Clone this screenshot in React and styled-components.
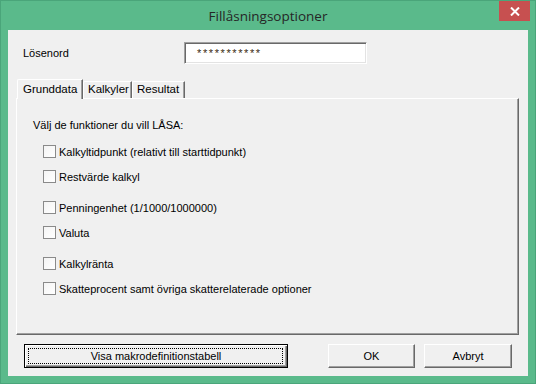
import styled, { createGlobalStyle } from 'styled-components';

const GlobalStyle = createGlobalStyle`
    body {
        margin: 0;
        background: #ffffff;
        font-family: "Liberation Sans", Arial, sans-serif;
    }
`;

const grupper = [
    ['Kalkyltidpunkt (relativt till starttidpunkt)', 'Restvärde kalkyl'],
    ['Penningenhet (1/1000/1000000)', 'Valuta'],
    ['Kalkylränta', 'Skatteprocent samt övriga skatterelaterade optioner'],
];

const flikar = [
    { namn: 'Grunddata', bredd: 66, aktiv: true },
    { namn: 'Kalkyler', bredd: 49 },
    { namn: 'Resultat', bredd: 53 },
];

export default function App() {
    return (
        <>
            <GlobalStyle />
            <Fonster>
                <TitelRad>
                    <Titel>Fillåsningsoptioner</Titel>
                    <Stang>
                        <svg width="10" height="9" viewBox="0 0 10 9">
                            <path d="M1 0.5 L9 8.5 M9 0.5 L1 8.5" stroke="#ffffff" strokeWidth="2" />
                        </svg>
                    </Stang>
                </TitelRad>
                <Klient>
                    <LosenRad>
                        <Etikett>Lösenord</Etikett>
                        <LosenFalt>***********</LosenFalt>
                    </LosenRad>

                    <FlikRad>
                        {flikar.map((f) => (
                            <Flik key={f.namn} aktiv={f.aktiv} bredd={f.bredd}>{f.namn}</Flik>
                        ))}
                    </FlikRad>

                    <Panel>
                        <Intro>Välj de funktioner du vill LÅSA:</Intro>
                        <Alternativ>
                            {grupper.map((grupp, i) => (
                                <Grupp key={i}>
                                    {grupp.map((text) => (
                                        <Rad key={text}>
                                            <Ruta />
                                            <RadText>{text}</RadText>
                                        </Rad>
                                    ))}
                                </Grupp>
                            ))}
                        </Alternativ>
                    </Panel>

                    <KnappRad>
                        <Knapp standard bredd={264}>Visa makrodefinitionstabell</Knapp>
                        <Knapp bredd={87} vanster={40}>OK</Knapp>
                        <Knapp bredd={88} vanster={9}>Avbryt</Knapp>
                    </KnappRad>
                </Klient>
            </Fonster>
        </>
    )
}

const Fonster = styled.div`
    width: 536px;
    height: 384px;
    box-sizing: border-box;
    background: #5aba8b;
    border: 1px solid #4aa57a;
    padding: 0 7px 7px 7px;
    display: flex;
    flex-direction: column;
`;

const TitelRad = styled.div`
    height: 29px;
    position: relative;
    display: flex;
    align-items: center;
    justify-content: center;
`;

const Titel = styled.div`
    font-family: "Open Sans", "Noto Sans", sans-serif;
    font-size: 13.5px;
    color: #262626;
    margin-top: 1px;
`;

const Stang = styled.div`
    position: absolute;
    right: -2px;
    top: 0;
    width: 31px;
    height: 20px;
    background: #c75050;
    display: flex;
    align-items: center;
    justify-content: center;
`;

const Klient = styled.div`
    flex: 1;
    background: #f0f0f0;
    padding: 0 9px 0 8px;
    display: flex;
    flex-direction: column;
    font-size: 11px;
    color: #000000;
`;

const LosenRad = styled.div`
    margin-top: 12px;
    height: 22px;
    padding-left: 7px;
    display: flex;
    align-items: center;
`;

const Etikett = styled.div`
    width: 161px;
`;

const LosenFalt = styled.div`
    width: 183px;
    height: 22px;
    box-sizing: border-box;
    background: #ffffff;
    border: 1px solid;
    border-color: #a0a0a0 #ffffff #ffffff #a0a0a0;
    box-shadow: inset 1px 1px #696969, inset -1px -1px #e3e3e3;
    padding-left: 12px;
    display: flex;
    align-items: center;
    letter-spacing: 1.6px;
    color: #3a2a10;
`;

const FlikRad = styled.div`
    margin-top: 15px;
    height: 19px;
    padding-left: 1px;
    display: flex;
    align-items: flex-end;
`;

const Flik = styled.div`
    position: relative;
    z-index: 1;
    width: ${props => props.bredd}px;
    height: ${props => props.aktiv ? "20px" : "17px"};
    margin-bottom: ${props => props.aktiv ? "-1px" : "0"};
    box-sizing: border-box;
    background: #f0f0f0;
    border-top: 1px solid #ffffff;
    border-left: 1px solid #ffffff;
    border-right: 1px solid #696969;
    border-top-left-radius: 2px;
    box-shadow: inset -1px 0 #a0a0a0;
    padding-left: ${props => props.aktiv ? "5px" : "4px"};
    padding-top: ${props => props.aktiv ? "3px" : "1px"};
    font-size: 11.5px;
    white-space: nowrap;
`;

const Panel = styled.div`
    height: 237px;
    box-sizing: border-box;
    border: 1px solid;
    border-color: #ffffff #696969 #696969 #ffffff;
    box-shadow: inset -1px -1px #a0a0a0;
    padding: 19px 0 0 16px;
`;

const Intro = styled.div`
    line-height: 14px;
`;

const Alternativ = styled.div`
    margin-top: 7px;
    margin-left: 10px;
`;

const Grupp = styled.div`
    & + & {
        margin-top: 6px;
    }
`;

const Rad = styled.div`
    height: 25px;
    display: flex;
    align-items: center;
`;

const Ruta = styled.div`
    width: 13px;
    height: 13px;
    box-sizing: border-box;
    border: 1px solid #8a8a8a;
    background: linear-gradient(135deg, #f4f4f4, #ffffff);
`;

const RadText = styled.span`
    margin-left: 3px;
`;

const KnappRad = styled.div`
    margin-top: 9px;
    padding-left: 8px;
    display: flex;
`;

const Knapp = styled.div`
    position: relative;
    width: ${props => props.bredd}px;
    height: 24px;
    margin-left: ${props => props.vanster || 0}px;
    box-sizing: border-box;
    background: #f0f0f0;
    border: 1px solid;
    border-color: ${props => props.standard ? "#000000" : "#ffffff #696969 #696969 #ffffff"};
    box-shadow: ${props => props.standard
        ? "inset 1px 1px #ffffff, inset -1px -1px #696969, inset -2px -2px #a0a0a0"
        : "inset -1px -1px #a0a0a0"};
    display: flex;
    align-items: center;
    justify-content: center;
    font-size: 11px;

    &::after {
        content: "";
        display: ${props => props.standard ? "block" : "none"};
        position: absolute;
        inset: 3px 4px 3px 3px;
        border: 1px dotted #000000;
    }
`;
